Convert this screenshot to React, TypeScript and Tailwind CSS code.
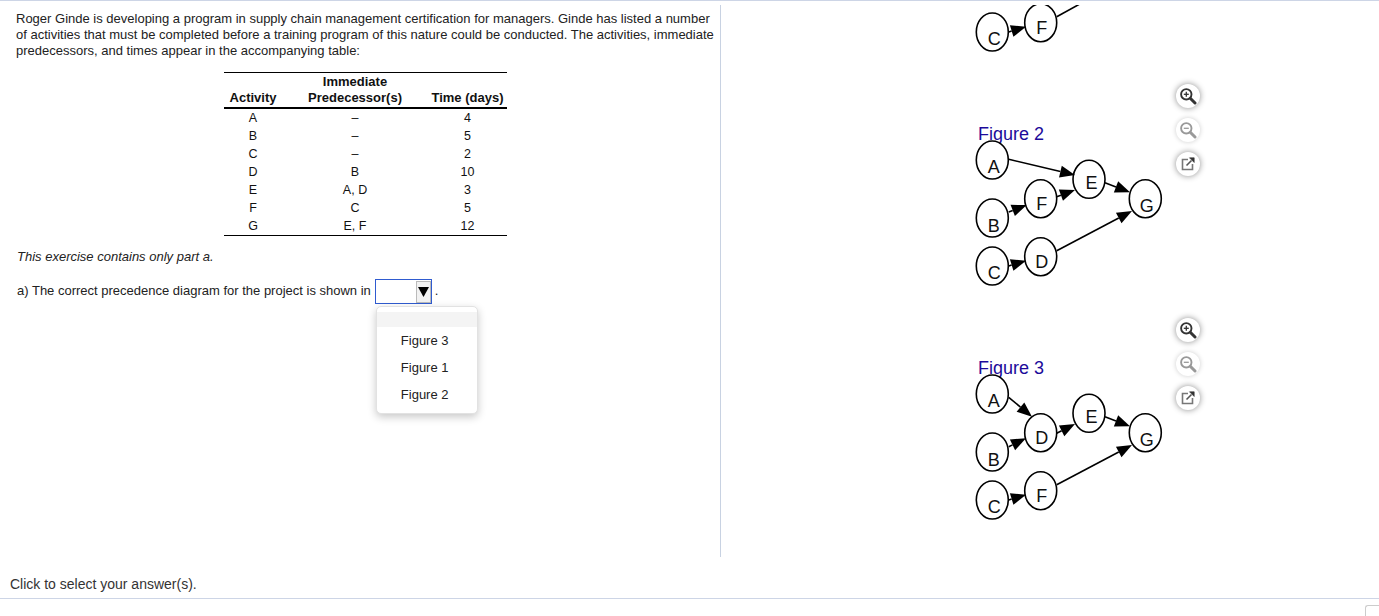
import React from "react";

type Node = [string, number, number, number, number];
type Edge = [number, number, number, number];

const pos = {
  a: [14.3, 20],
  b: [14.3, 78],
  c: [14.3, 126],
  m1: [62.7, 58.7],
  m2: [62.7, 116.7],
  e: [111, 39.3],
  g: [167.3, 58.7],
};

function Arrow({ e }: { e: Edge }) {
  const [x1, y1, x2, y2] = e;
  const dx = x2 - x1;
  const dy = y2 - y1;
  const len = Math.hypot(dx, dy);
  const ux = dx / len;
  const uy = dy / len;
  const bx = x2 - ux * 15;
  const by = y2 - uy * 15;
  const px = -uy * 6;
  const py = ux * 6;
  return (
    <g>
      <line x1={x1} y1={y1} x2={bx} y2={by} stroke="#000" strokeWidth="1.6" />
      <polygon points={`${x2},${y2} ${bx + px},${by + py} ${bx - px},${by - py}`} fill="#000" />
    </g>
  );
}

function Bubble({ n }: { n: Node }) {
  const [label, cx, cy, off, xoff] = n;
  return (
    <g>
      <ellipse cx={cx} cy={cy} rx="16" ry="19" fill="#fff" stroke="#000" strokeWidth="1.6" />
      <text x={cx + xoff} y={cy + off + 6.5} textAnchor="middle" fontSize="18" fill="#111" fontFamily="'Liberation Sans', Arial, sans-serif">
        {label}
      </text>
    </g>
  );
}

const shared: Edge[] = [
  [127, 42.7, 152, 52.3],
  [78.7, 110.7, 154, 71],
  [30.7, 126, 48, 120.7],
];

const fig2Edges: Edge[] = [
  [30.7, 19.3, 97, 35],
  [30.7, 72, 48.7, 65],
  [78.7, 56.7, 97, 50],
  ...shared,
];

const fig3Edges: Edge[] = [
  [30.7, 23.3, 54, 42.7],
  [30.7, 72.7, 48, 64.3],
  [78.7, 59.3, 97, 50],
  ...shared,
];

function nodes(m1: string, m2: string): Node[] {
  return [
    ["A", pos.a[0], pos.a[1], 6.5, 1.5],
    ["B", pos.b[0], pos.b[1], 7, 1.5],
    ["C", pos.c[0], pos.c[1], 6.5, 2],
    [m1, pos.m1[0], pos.m1[1], 5, 1],
    [m2, pos.m2[0], pos.m2[1], 5, 1],
    ["E", pos.e[0], pos.e[1], 3, 2.5],
    ["G", pos.g[0], pos.g[1], 7, 1.5],
  ];
}

function Diagram({ edges, items }: { edges: Edge[]; items: Node[] }) {
  return (
    <svg width="194" height="146" viewBox="-4 0 194 146" className="relative -ml-[4px] -mt-[5px] block">
      {items.map((n) => (
        <Bubble key={n[0]} n={n} />
      ))}
      {edges.map((e, i) => (
        <Arrow key={i} e={e} />
      ))}
    </svg>
  );
}

function ZoomIcon({ plus, color }: { plus: boolean; color: string }) {
  return (
    <svg width="18" height="18" viewBox="0 0 18 18" fill="none">
      <circle cx="7.3" cy="7.3" r="5.2" stroke={color} strokeWidth="1.9" />
      <path d="M11.5 11.5L16 16" stroke={color} strokeWidth="3" strokeLinecap="round" />
      <path d="M4.8 7.3H9.8" stroke={color} strokeWidth="1.3" />
      {plus && <path d="M7.3 4.8V9.8" stroke={color} strokeWidth="1.3" />}
    </svg>
  );
}

function OpenIcon() {
  return (
    <svg width="16" height="16" viewBox="0 0 16 16" fill="none">
      <path d="M8 3.5H2.5V13.5H12.5V8" stroke="#777" strokeWidth="1.6" />
      <path d="M6.5 9.5L11.5 4.5" stroke="#555" strokeWidth="1.6" />
      <path d="M9.5 1.8H14.2V6.5Z" fill="#333" stroke="#333" strokeWidth="0.6" />
    </svg>
  );
}

function ToolBtn({ children }: { children: React.ReactNode }) {
  return (
    <div className="flex h-[24px] w-[24px] items-center justify-center rounded-full bg-white shadow-[0_0_6px_rgba(0,0,0,0.45)]">
      {children}
    </div>
  );
}

function Tools() {
  return (
    <div className="ml-[8px] flex flex-col gap-[10px]">
      <ToolBtn>
        <ZoomIcon plus color="#333" />
      </ToolBtn>
      <div className="flex h-[24px] w-[24px] items-center justify-center rounded-full bg-white shadow-[0_0_5px_rgba(0,0,0,0.2)]">
        <ZoomIcon plus={false} color="#999" />
      </div>
      <ToolBtn>
        <OpenIcon />
      </ToolBtn>
    </div>
  );
}

function FigureRow({ title, edges, items }: { title: string; edges: Edge[]; items: Node[] }) {
  return (
    <div className="flex h-[234px] items-start">
      <div className="w-[190px] pt-[40px]">
        <div className="h-[21px] text-[18px] leading-[21px] text-[#1c0a9a]">{title}</div>
        <Diagram edges={edges} items={items} />
      </div>
      <Tools />
    </div>
  );
}

const rows = [
  ["A", "–", "4"],
  ["B", "–", "5"],
  ["C", "–", "2"],
  ["D", "B", "10"],
  ["E", "A, D", "3"],
  ["F", "C", "5"],
  ["G", "E, F", "12"],
];

export default function App() {
  return (
    <div className="flex h-[616px] w-[1379px] flex-col overflow-hidden border-t border-[#cdd5e6] bg-white font-['Liberation_Sans',Arial,sans-serif] text-[#222]">
      <div className="flex h-[556px] shrink-0 pt-[4px]">
        <div className="h-[552px] w-[721px] shrink-0 border-r border-[#c8d2e2] pl-[16px]">
          <div className="pt-[6px] text-[13px] leading-[16px]">
            <div>Roger Ginde is developing a program in supply chain management certification for managers. Ginde has listed a number</div>
            <div>of activities that must be completed before a training program of this nature could be conducted. The activities, immediate</div>
            <div>predecessors, and times appear in the accompanying table:</div>
          </div>
          <table className="ml-[208px] mt-[13px] w-[283px] table-fixed border-y border-black text-[12.5px] leading-[18px] text-[#111]">
            <thead>
              <tr className="border-b-2 border-black text-[13px] font-bold">
                <th className="w-[58px] pb-0 text-center align-bottom font-bold">Activity</th>
                <th className="w-[146px] pb-[1px] pt-[1px] text-center align-bottom font-bold leading-[16px]">
                  Immediate
                  <br />
                  Predecessor(s)
                </th>
                <th className="w-[79px] pb-0 text-center align-bottom font-bold">Time (days)</th>
              </tr>
            </thead>
            <tbody>
              {rows.map((r) => (
                <tr key={r[0]}>
                  {r.map((c, i) => (
                    <td key={i} className="text-center">
                      {c}
                    </td>
                  ))}
                </tr>
              ))}
            </tbody>
          </table>
          <div className="ml-[1px] mt-[13px] text-[13px] italic leading-[16px]">This exercise contains only part a.</div>
          <div className="relative ml-[1px] mt-[14px] flex items-start text-[13px] leading-[16px]">
            <span className="pt-[4px]">a) The correct precedence diagram for the project is shown in</span>
            <div className="relative ml-[4px] flex h-[25px] w-[57px] items-center justify-end border border-[#2f5bd0]">
              <div className="flex h-[22px] w-[15px] items-center justify-center border border-[#bbb] bg-[#f2f2f2] text-black">
                <svg width="11" height="11" viewBox="0 0 11 11">
                  <polygon points="0,1 11,1 5.5,11" fill="#000" />
                </svg>
              </div>
              <div className="absolute left-0 top-[26px] z-10 w-[102px] rounded-[5px] border border-[#e2e2e2] bg-white pb-[5px] pt-[5px] text-[#222] shadow-[0_3px_8px_rgba(0,0,0,0.22)]">
                <div className="h-[15px] bg-[#f4f4f4]" />
                <div className="flex h-[27px] items-center pl-[24px]">Figure 3</div>
                <div className="flex h-[27px] items-center pl-[24px]">Figure 1</div>
                <div className="flex h-[27px] items-center pl-[24px]">Figure 2</div>
              </div>
            </div>
            <span className="ml-[3px] pt-[4px]">.</span>
          </div>
        </div>
        <div className="ml-[257px] flex flex-col">
          <svg width="194" height="79" viewBox="-4 99 194 79" className="-ml-[4px] block">
            <Bubble n={["C", pos.c[0], pos.c[1], 6.5, 2]} />
            <Bubble n={["F", pos.m2[0], pos.m2[1], 5, 1]} />
            <Arrow e={[30.7, 126, 48, 120.7]} />
            <line x1="78.7" y1="110.7" x2="120" y2="88" stroke="#000" strokeWidth="1.6" />
          </svg>
          <FigureRow title="Figure 2" edges={fig2Edges} items={nodes("F", "D")} />
          <FigureRow title="Figure 3" edges={fig3Edges} items={nodes("D", "F")} />
        </div>
      </div>
      <div className="flex h-[42px] shrink-0 items-end border-b border-[#cdd5e6] pb-[5px] pl-[10px] text-[14px] leading-[18px] text-[#333]">
        Click to select your answer(s).
      </div>
      <div className="flex h-[17px] shrink-0 justify-end pt-[6px]">
        <div className="h-[20px] w-[14px] rounded-tl-[3px] border-l border-t border-[#ccc]" />
      </div>
    </div>
  );
}
